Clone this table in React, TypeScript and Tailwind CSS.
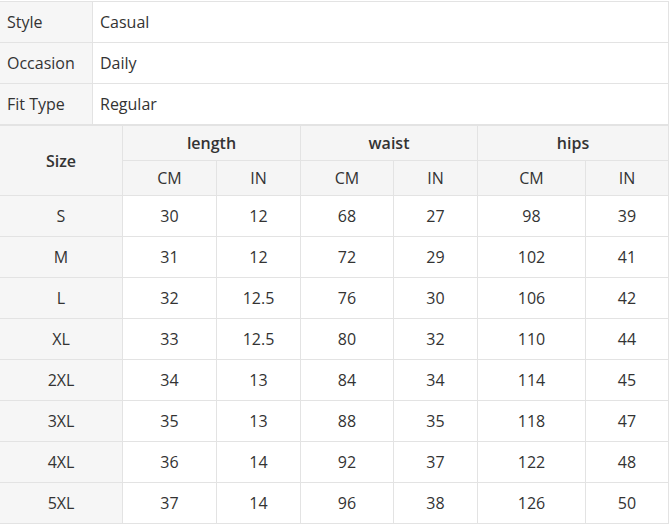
const attrs = [
  ['Style', 'Casual'],
  ['Occasion', 'Daily'],
  ['Fit Type', 'Regular'],
];

const sizes: [string, string, string, string, string, string, string][] = [
  ['S', '30', '12', '68', '27', '98', '39'],
  ['M', '31', '12', '72', '29', '102', '41'],
  ['L', '32', '12.5', '76', '30', '106', '42'],
  ['XL', '33', '12.5', '80', '32', '110', '44'],
  ['2XL', '34', '13', '84', '34', '114', '45'],
  ['3XL', '35', '13', '88', '35', '118', '47'],
  ['4XL', '36', '14', '92', '37', '122', '48'],
  ['5XL', '37', '14', '96', '38', '126', '50'],
];

const head = 'bg-[#f5f5f5] flex items-center justify-center';

export default function App() {
  return (
    <div
      className="bg-white w-[669px] h-[524px] overflow-hidden text-base text-[#333]"
      style={{ fontFamily: '"Open Sans", "Liberation Sans", sans-serif' }}
    >
      <div className="-ml-px mt-px w-[670px]">
        {/* attributes */}
        <div className="grid grid-cols-[92px_575px] gap-px p-px bg-[#e3e3e3]">
          {attrs.map(([k, v]) => (
            <div key={k} className="contents">
              <div className="bg-[#f6f6f6] h-10 flex items-center pl-[7px]">{k}</div>
              <div className="bg-white h-10 flex items-center pl-[7px]">{v}</div>
            </div>
          ))}
        </div>

        {/* size chart */}
        <div className="grid grid-cols-[122px_93px_83px_92px_83px_107px_82px] grid-rows-[34px_34px] auto-rows-[40px] gap-px p-px bg-[#e3e3e3] mt-0">
          <div className={`${head} row-span-2 font-semibold`}>Size</div>
          <div className={`${head} col-span-2 font-semibold`}>length</div>
          <div className={`${head} col-span-2 font-semibold`}>waist</div>
          <div className={`${head} col-span-2 font-semibold`}>hips</div>
          {['CM', 'IN', 'CM', 'IN', 'CM', 'IN'].map((u, i) => (
            <div key={i} className={head}>
              {u}
            </div>
          ))}
          {sizes.map((row) => (
            <div key={row[0]} className="contents">
              {row.map((cell, i) => (
                <div
                  key={i}
                  className={`${i === 0 ? 'bg-[#f6f6f6]' : 'bg-white'} flex items-center justify-center`}
                >
                  {cell}
                </div>
              ))}
            </div>
          ))}
        </div>
      </div>
    </div>
  );
}
